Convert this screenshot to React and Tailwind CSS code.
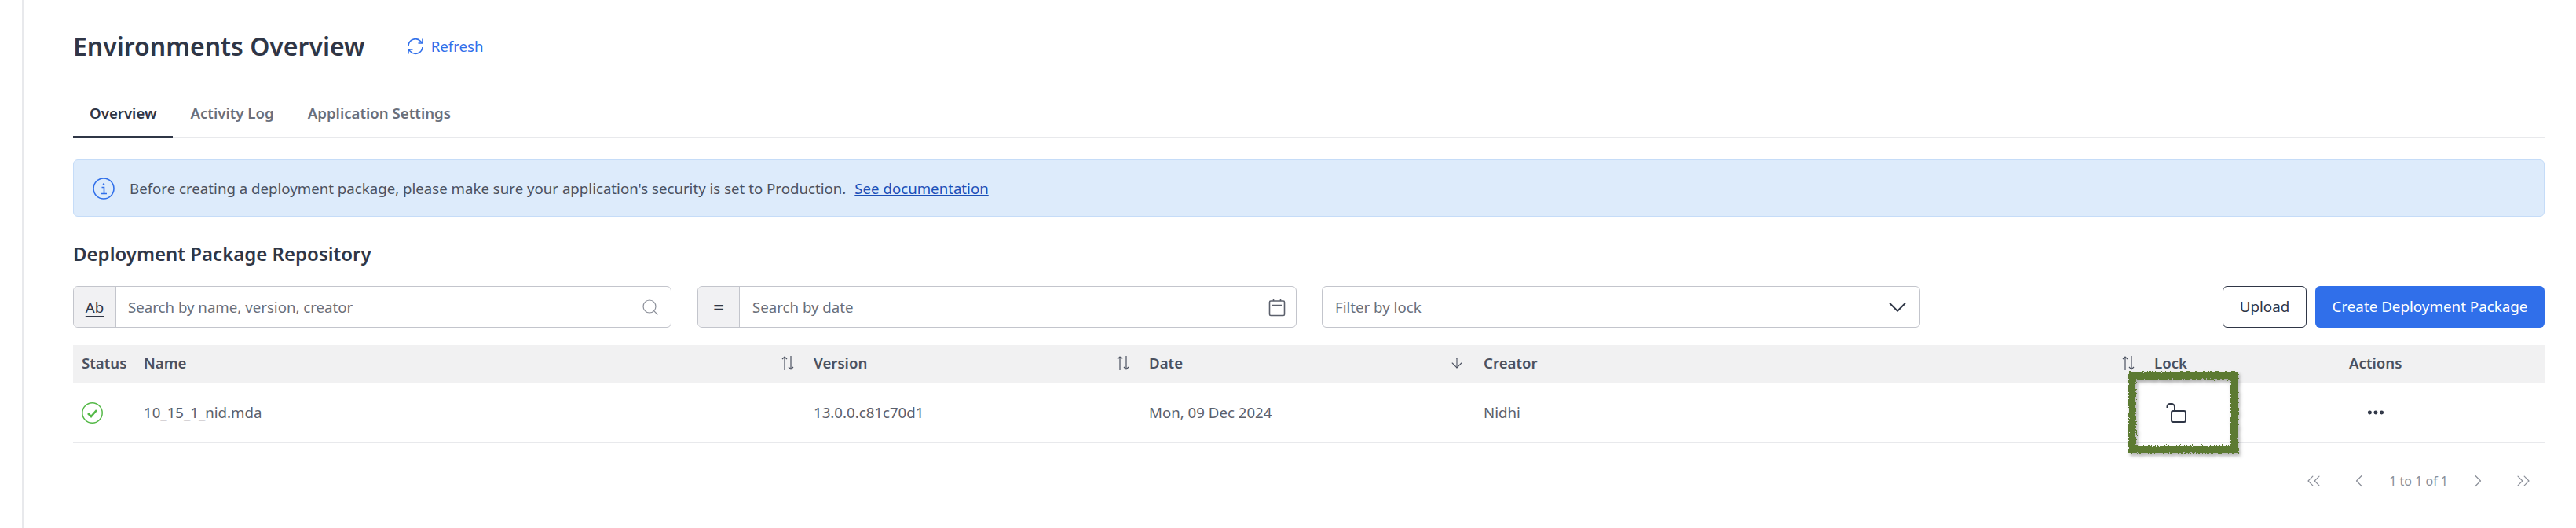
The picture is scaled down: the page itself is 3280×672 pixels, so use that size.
import React from 'react';
import { Search, ChevronDown, ChevronLeft, ChevronRight, ChevronsLeft, ChevronsRight, ArrowDown, MoreHorizontal } from 'lucide-react';

const SortIcon = () => (
  <svg width="18" height="22" viewBox="0 0 18 22" fill="none" stroke="#4b5160" strokeWidth="1.2" className="shrink-0">
    <path d="M5 20V3M2 6l3-3 3 3" />
    <path d="M13 2v17M10 16l3 3 3-3" />
  </svg>
);

const HeaderCell = ({ label, sort, className = '' }) => (
  <div className={`flex items-center justify-between pl-[11px] pr-[13px] ${className}`}>
    <span>{label}</span>
    {sort}
  </div>
);

// Hand drawn green marker frame around the lock cell
const MarkerFrame = () => (
  <svg className="absolute left-[-23px] top-[-16px] pointer-events-none drop-shadow-[2px_3px_2px_rgba(0,0,0,0.3)]" width="142" height="106" viewBox="0 0 142 106" fill="none">
    <defs>
      <filter id="rough" x="-10%" y="-10%" width="120%" height="120%">
        <feTurbulence type="fractalNoise" baseFrequency="0.6" numOctaves="3" seed="4" />
        <feDisplacementMap in="SourceGraphic" scale="7" />
      </filter>
    </defs>
    <rect x="6" y="6" width="130" height="94" stroke="#5c7a33" strokeWidth="10" filter="url(#rough)" />
  </svg>
);

export default function App() {
  return (
    <div className="h-[672px] w-[3280px] bg-white font-['Noto_Sans',sans-serif] text-[#2f3646] overflow-hidden">
      <div className="ml-[28px] h-full border-l-2 border-[#e8e9ec] pl-[63px] pr-[40px]">
        <div className="flex items-center h-[117px] pt-[1px]">
          <h1 className="text-[32px] font-semibold leading-none">Environments Overview</h1>
          <button className="ml-[52px] flex items-center gap-[8px] text-[18.67px] text-[#306fea]">
            <svg width="24" height="24" viewBox="0 0 24 24" fill="none" stroke="#306fea" strokeWidth="1.6">
              <path d="M3 11a9 9 0 0 1 15.5-5.5L21 8M21 2.5V8h-5.5" />
              <path d="M21 13a9 9 0 0 1-15.5 5.5L3 16M3 21.5V16h5.5" />
            </svg>
            Refresh
          </button>
        </div>

        <div className="flex h-[59px] border-b-2 border-[#e8e9ec] text-[18.67px] font-semibold text-[#6a6f7b]">
          <div className="px-[21px] h-[59px] pt-[13px] border-b-[3px] border-[#2f3646] text-[#2f3646]">Overview</div>
          <div className="pl-[22px] pr-[22px] pt-[13px]">Activity Log</div>
          <div className="pl-[21px] pt-[13px]">Application Settings</div>
        </div>

        <div className="mt-[27px] h-[73px] flex items-center rounded-[6px] border border-[#c5dcf8] bg-[#ddebfb] pl-[24px] text-[18.67px] text-[#4b5160]">
          <svg width="28" height="28" viewBox="0 0 28 28" fill="none" stroke="#306fea" strokeWidth="1.6" className="shrink-0">
            <circle cx="14" cy="14" r="13" />
            <circle cx="14" cy="8.5" r="1.2" fill="#306fea" stroke="none" />
            <path d="M11.5 12.5H14.5V20M11 20.5h7" />
          </svg>
          <span className="ml-[19px]">Before creating a deployment package, please make sure your application's security is set to Production.</span>
          <a className="ml-[11px] text-[#1b4fb8] underline">See documentation</a>
        </div>

        <h2 className="mt-[30px] text-[24px] font-semibold leading-[34px]">Deployment Package Repository</h2>

        <div className="mt-[24px] flex h-[53px] text-[18.67px]">
          <div className="flex w-[762px] rounded-[6px] border border-[#c3c5cc] overflow-hidden">
            <div className="w-[54px] flex items-center justify-center bg-[#f1f1f3] border-r border-[#c3c5cc] underline decoration-2 underline-offset-4">Ab</div>
            <div className="flex-1 flex items-center justify-between pl-[15px] pr-[14px] text-[#6a6f7b]">
              <span>Search by name, version, creator</span>
              <Search size={24} strokeWidth={1.2} className="text-[#8b8f99]" />
            </div>
          </div>
          <div className="ml-[33px] flex w-[763px] rounded-[6px] border border-[#c3c5cc] overflow-hidden">
            <div className="w-[53px] flex items-center justify-center bg-[#f1f1f3] border-r border-[#c3c5cc] text-[24px] font-semibold">=</div>
            <div className="flex-1 flex items-center justify-between pl-[16px] pr-[13px] text-[#6a6f7b]">
              <span>Search by date</span>
              <svg width="22" height="24" viewBox="0 0 22 24" fill="none" stroke="#5b606c" strokeWidth="1.6">
                <rect x="1.5" y="4" width="19" height="18.5" rx="1.5" />
                <path d="M5 9.5h12M6.5 1V4M15.5 1V4" />
              </svg>
            </div>
          </div>
          <div className="ml-[32px] flex w-[762px] items-center justify-between rounded-[6px] border border-[#c3c5cc] pl-[16px] pr-[9px] text-[#6a6f7b]">
            <span>Filter by lock</span>
            <ChevronDown size={38} strokeWidth={1.2} className="text-[#2f3646]" />
          </div>
          <button className="ml-auto w-[107px] rounded-[6px] border border-[#2f3646] text-[18.8px]">Upload</button>
          <button className="ml-[11px] w-[292px] rounded-[6px] bg-[#306fea] text-[18.8px] text-white">Create Deployment Package</button>
        </div>

        <div className="mt-[22px] grid grid-cols-[79px_853px_427px_426px_854px_248px_1fr] h-[49px] items-center pb-[4px] bg-[#f1f1f2] text-[18.67px] font-semibold text-[#4b5160]">
          <HeaderCell label="Status" />
          <HeaderCell label="Name" sort={<SortIcon />} />
          <HeaderCell label="Version" sort={<SortIcon />} />
          <HeaderCell label="Date" sort={<ArrowDown size={20} strokeWidth={1.3} />} />
          <HeaderCell label="Creator" sort={<SortIcon />} />
          <HeaderCell label="Lock" />
          <HeaderCell label="Actions" />
        </div>

        <div className="grid grid-cols-[79px_853px_427px_426px_854px_248px_1fr] h-[76px] items-center border-b-2 border-[#e8e9ec] text-[18.67px] text-[#5b606c]">
          <div className="pl-[11px]">
            <svg width="27" height="27" viewBox="0 0 27 27" fill="none">
              <circle cx="13.5" cy="13.5" r="12.7" stroke="#55b948" strokeWidth="1.5" />
              <path d="M8 14l4 4 7-8" stroke="#55b948" strokeWidth="2.6" />
            </svg>
          </div>
          <div className="pl-[11px]">10_15_1_nid.mda</div>
          <div className="pl-[11px]">13.0.0.c81c70d1</div>
          <div className="pl-[11px]">Mon, 09 Dec 2024</div>
          <div className="pl-[11px]">Nidhi</div>
          <div className="pl-[26px] relative h-full flex items-center">
            <svg width="27" height="25" viewBox="0 0 27 25" fill="none" stroke="#2f3646" strokeWidth="2">
              <rect x="7" y="10" width="18" height="14" rx="2" />
              <path d="M1.5 6V4.5A3.5 3.5 0 0 1 5 1h2a4 4 0 0 1 4 4v5" />
            </svg>
            <MarkerFrame />
          </div>
          <div className="pl-[32px]">
            <MoreHorizontal size={26} strokeWidth={2.6} className="text-[#2f3646]" />
          </div>
        </div>

        <div className="mt-[34px] flex items-center justify-end pr-[13px] text-[16px] text-[#8b8f99]">
          <ChevronsLeft size={28} strokeWidth={1} />
          <ChevronLeft size={28} strokeWidth={1} className="ml-[30px]" />
          <span className="mx-[24px]">1 to 1 of 1</span>
          <ChevronRight size={28} strokeWidth={1} />
          <ChevronsRight size={28} strokeWidth={1} className="ml-[30px]" />
        </div>
      </div>
    </div>
  );
}
